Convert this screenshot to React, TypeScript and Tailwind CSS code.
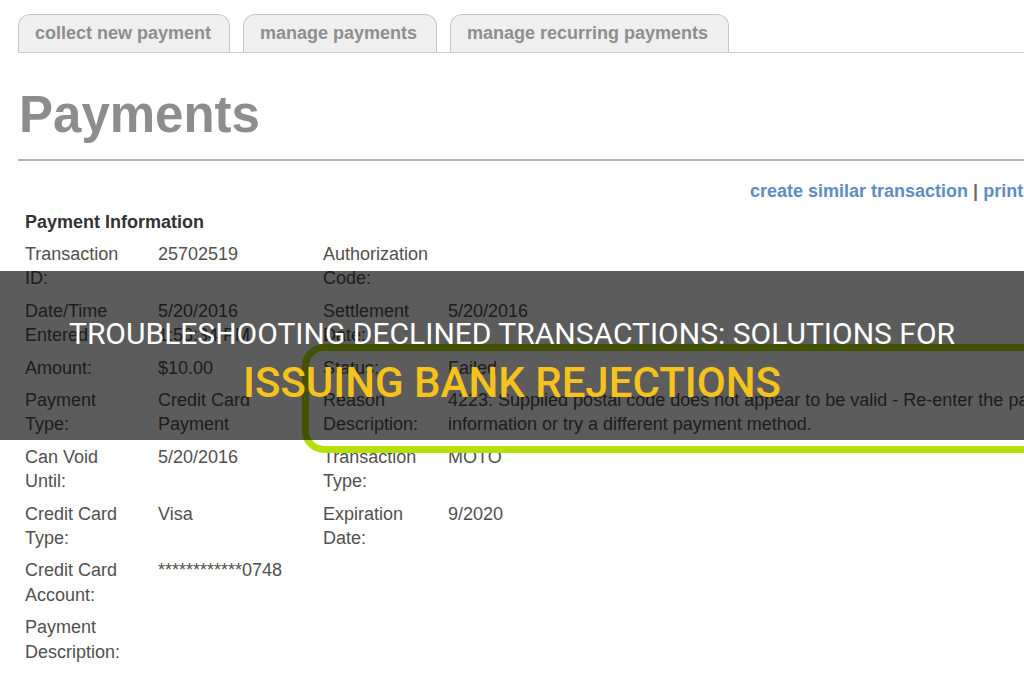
import React from 'react';

interface InfoRow {
  label: string;
  value?: React.ReactNode;
  label2?: string;
  value2?: React.ReactNode;
}

const rows: InfoRow[] = [
  { label: 'Transaction ID:', value: '25702519', label2: 'Authorization Code:' },
  { label: 'Date/Time Entered:', value: '5/20/2016 1:56:34 PM', label2: 'Settlement Date:', value2: '5/20/2016' },
  { label: 'Amount:', value: '$10.00', label2: 'Status:', value2: 'Failed' },
  {
    label: 'Payment Type:',
    value: 'Credit Card Payment',
    label2: 'Reason Description:',
    value2: (
      <span className="whitespace-nowrap">
        4223: Supplied postal code does not appear to be valid - Re-enter the payment
        <br />
        information or try a different payment method.
      </span>
    ),
  },
  { label: 'Can Void Until:', value: '5/20/2016', label2: 'Transaction Type:', value2: 'MOTO' },
  { label: 'Credit Card Type:', value: 'Visa', label2: 'Expiration Date:', value2: '9/2020' },
  { label: 'Credit Card Account:', value: '************0748' },
  { label: 'Payment Description:' },
];

const tabs = [
  { name: 'collect new payment', w: 'w-[212px]' },
  { name: 'manage payments', w: 'w-[194px]' },
  { name: 'manage recurring payments', w: 'w-[279px]' },
];

const App: React.FC = () => {
  return (
    <div className="relative w-[1024px] h-[680px] overflow-hidden bg-white font-['Liberation_Sans',Arial,sans-serif]">
      {/* screenshot of the payments page */}
      <div className="w-[1200px] pl-[18px] pt-[14px]">
        <div className="flex items-end gap-[13px] border-b border-[#c8ccd2]">
          {tabs.map((tab) => (
            <div
              key={tab.name}
              className={`${tab.w} h-[38px] flex items-center px-[16px] whitespace-nowrap rounded-t-[12px] border border-b-0 border-[#c3c7cd] bg-[#efefef] text-[18px] font-bold text-[#8e8e8e]`}
            >
              {tab.name}
            </div>
          ))}
        </div>

        <h1 className="mt-[34px] pl-[1px] text-[51px] leading-[56px] font-bold text-[#8d8d8d]">Payments</h1>

        <div className="mt-[16px] h-[2px] bg-[#b3b3b3]" />

        <div className="mt-[18px] pl-[732px] whitespace-nowrap text-[18px] leading-[24px] font-bold text-[#5f8cc3]">
          create similar transaction <span className="text-[#6b6b6b]">|</span> print
        </div>

        <div className="mt-[7px] pl-[7px] text-[18px] leading-[24px] font-bold text-[#333]">Payment Information</div>

        <div className="mt-[8px] pl-[7px] flex flex-col gap-[8px] text-[18px] leading-[24.4px] text-[#505050]">
          {rows.map((row, i) => (
            <div key={i} className="flex">
              <div className="w-[133px] pr-[30px]">{row.label}</div>
              <div className="w-[165px] pr-[25px]">{row.value}</div>
              <div className="w-[125px] pr-[12px]">{row.label2}</div>
              <div className="flex-1">{row.value2}</div>
            </div>
          ))}
        </div>
      </div>

      {/* highlight drawn on the screenshot */}
      <div className="absolute left-[302px] top-[344px] w-[800px] h-[109px] rounded-[22px] border-[7px] border-[#b7e00a]" />

      {/* title band */}
      <div className="absolute left-0 right-0 top-[271px] h-[169px] pt-[10px] bg-black/[0.64] flex flex-col items-center justify-center font-['Roboto',sans-serif]">
        <div className="text-[30px] leading-[40px] text-white">
          TROUBLESHOOTING DECLINED TRANSACTIONS: SOLUTIONS FOR
        </div>
        <div className="mt-[4px] text-[42px] leading-[50px] font-medium text-[#f6c21c]">ISSUING BANK REJECTIONS</div>
      </div>
    </div>
  );
};

export default App;
